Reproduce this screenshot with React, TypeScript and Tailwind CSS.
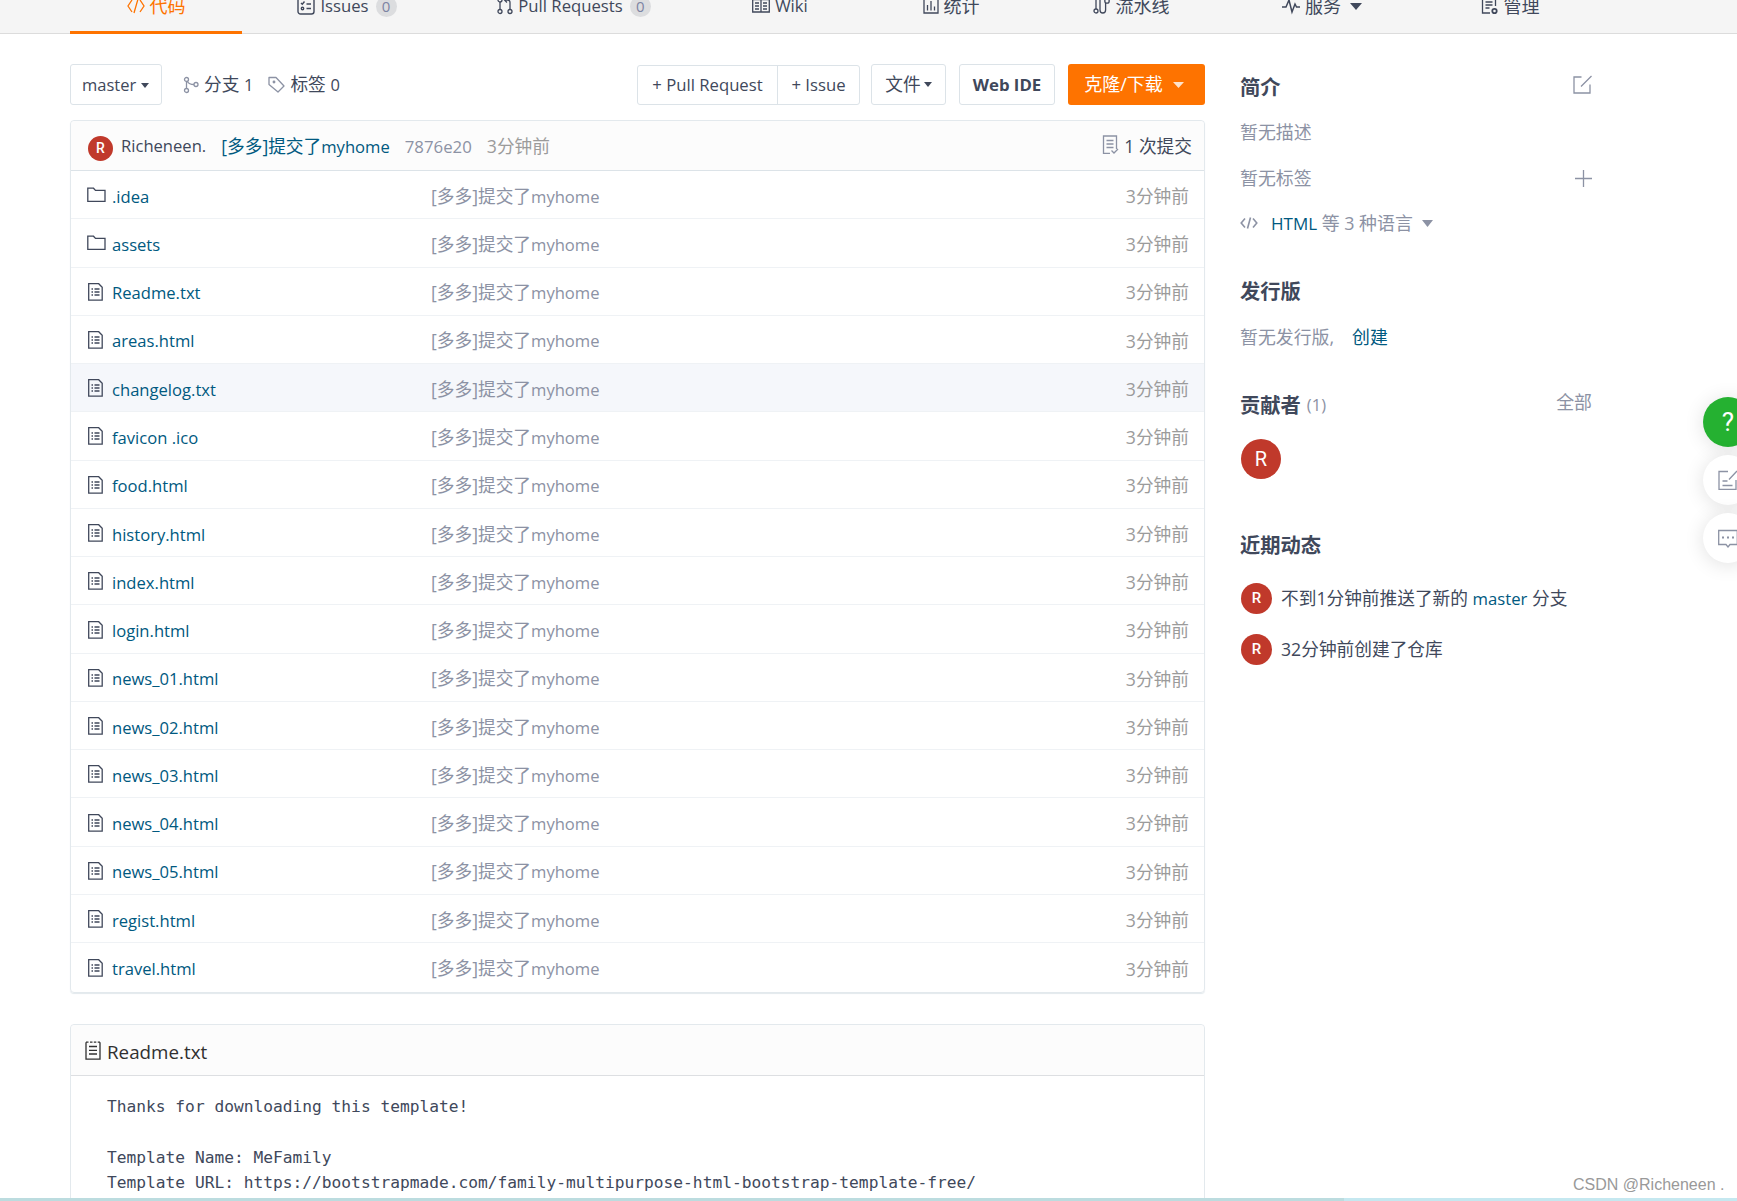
import type { ReactNode } from "react";
import clsx from "clsx";

interface TabTypes {
  label: string;
  width: string;
  icon: ReactNode;
  count?: number;
  active?: boolean;
  caret?: boolean;
  latin?: boolean;
}

interface FileRowTypes {
  name: string;
  folder?: boolean;
  hovered?: boolean;
}

interface IconProps {
  className?: string;
  size?: number;
  width?: number;
  strokeWidth?: number;
  children?: ReactNode;
}

function Icon({ className, size = 18, width, strokeWidth = 1.3, children }: IconProps) {
  const w = width ?? size;
  return (
    <svg
      className={clsx("shrink-0", className)}
      width={w}
      height={size}
      viewBox={`0 0 ${w} ${size}`}
      fill="none"
      stroke="currentColor"
      strokeWidth={strokeWidth}
    >
      {children}
    </svg>
  );
}

function Caret({ className }: { className?: string }) {
  return (
    <svg className={clsx("shrink-0", className)} viewBox="0 0 10 6" fill="currentColor" preserveAspectRatio="none">
      <path d="M0 0h10L5 6z" />
    </svg>
  );
}

const CodeIcon = () => (
  <Icon>
    <path d="M5 3L1 9l4 6M13 3l4 6-4 6M11 2L7 16" />
  </Icon>
);

const IssuesIcon = () => (
  <Icon strokeWidth={1.4}>
    <rect x="1" y="1" width="16" height="16" rx="2.5" />
    <path d="M4 6l1.3 1.3L7.500 4.500M9.500 7H14M9.500 11.500H14" />
    <circle cx="5.5" cy="11.5" r="1.2" />
  </Icon>
);

const PullIcon = () => (
  <Icon width={16}>
    <circle cx="3" cy="14.5" r="2" />
    <circle cx="3" cy="3" r="2" />
    <circle cx="13" cy="14.5" r="2" />
    <path d="M3 5v7.500M13 12.500V5.500Q13 3 10.500 3H8M10 .5L7.500 3 10 5.500" />
  </Icon>
);

const WikiIcon = () => (
  <Icon>
    <path d="M.7 2.500H9V15H.7zM9 2.500h8.300V15H9zM3 6h4M3 9h4M3 12h4M11 6h4M11 9h4M11 12h4" />
  </Icon>
);

const ChartIcon = () => (
  <Icon width={16}>
    <path d="M1 3v13h14V3M4.500 13.500V8M8 13.500V4M11.500 13.500v-4" />
  </Icon>
);

const PipelineIcon = () => (
  <Icon>
    <circle cx="3" cy="14" r="2" />
    <path d="M3 12V3M7 3v10q0 3 2.800 3t2.800-3V6" />
    <circle cx="14" cy="4" r="2.2" />
  </Icon>
);

const ServiceIcon = () => (
  <Icon strokeWidth={1.5}>
    <path d="M0 10h4L7 3l3 12 3-8 1.500 3H18" />
  </Icon>
);

const ManageIcon = () => (
  <Icon>
    <path d="M9 16H1.500V1.500h13V9M4.500 5h7M4.500 8h7M4.500 11h4" />
    <circle cx="13.5" cy="14" r="2.2" strokeWidth={1.8} />
  </Icon>
);

const FolderIcon = () => (
  <Icon size={16} width={19}>
    <path d="M.8 14.300V1.200h5.700l2 2.200h9.500v10.900z" />
  </Icon>
);

const FileIcon = () => (
  <Icon width={15}>
    <path d="M.7.700h10l3.500 3.500v13H.7zM3.500 6h1.500M6.500 6h5M3.500 9h1.500M6.500 9h5M3.500 12h1.500M6.500 12h5" />
  </Icon>
);

const ReadmeIcon = () => (
  <Icon size={19} width={16}>
    <path d="M1 1.200v17h14v-17M1 1.200h2.500M5 1.200h2.500M8.800 1.200h2.500M12.700 1.200H15M4 5.500h8M4 9.300h8M4 13h8" />
  </Icon>
);

const BranchIcon = () => (
  <Icon width={16} className="text-[#8c92a4]">
    <circle cx="3.5" cy="3.5" r="2" />
    <circle cx="3.5" cy="14.5" r="2" />
    <circle cx="13" cy="8.5" r="2" />
    <path d="M3.500 5.500v7M4.500 5.500Q6 8.500 11 8.500" />
  </Icon>
);

const TagIcon = () => (
  <Icon width={17} className="text-[#8c92a4]">
    <path d="M1 1.500h7l8 8.500-6 6L1 8.500z" strokeLinejoin="round" />
    <circle cx="6" cy="6" r=".8" fill="currentColor" />
  </Icon>
);

const CommitIcon = () => (
  <Icon size={20} width={17} className="-mt-[3px] text-[#8c92a4]">
    <path d="M8 18.300H1.500V1h13v13M4.500 5.500h7M4.500 9h7M4.500 12.500h7M9.500 15.500l2.500 2.500 4-4" />
  </Icon>
);

const EditIcon = () => (
  <Icon size={19} width={19} className="-mt-[6px] text-[#8c92a4]">
    <path d="M8.500 2H1v16h16V9.500M8 11.500L18.500 1" />
  </Icon>
);

const tabs: TabTypes[] = [
  { label: "代码", width: "w-[172px]", icon: <CodeIcon />, active: true },
  { label: "Issues", width: "w-[210px]", icon: <IssuesIcon />, count: 0, latin: true },
  { label: "Pull Requests", width: "w-[244px]", icon: <PullIcon />, count: 0, latin: true },
  { label: "Wiki", width: "w-[168px]", icon: <WikiIcon />, latin: true },
  { label: "统计", width: "w-[174px]", icon: <ChartIcon /> },
  { label: "流水线", width: "w-[186px]", icon: <PipelineIcon /> },
  { label: "服务", width: "w-[196px]", icon: <ServiceIcon />, caret: true },
  { label: "管理", width: "w-[180px]", icon: <ManageIcon /> },
];

const files: FileRowTypes[] = [
  { name: ".idea", folder: true },
  { name: "assets", folder: true },
  { name: "Readme.txt" },
  { name: "areas.html" },
  { name: "changelog.txt", hovered: true },
  { name: "favicon .ico" },
  { name: "food.html" },
  { name: "history.html" },
  { name: "index.html" },
  { name: "login.html" },
  { name: "news_01.html" },
  { name: "news_02.html" },
  { name: "news_03.html" },
  { name: "news_04.html" },
  { name: "news_05.html" },
  { name: "regist.html" },
  { name: "travel.html" },
];

const readme = `Thanks for downloading this template!

Template Name: MeFamily
Template URL: https://bootstrapmade.com/family-multipurpose-html-bootstrap-template-free/`;

function Avatar({ className }: { className: string }) {
  return (
    <span
      className={clsx(
        "flex shrink-0 items-center justify-center rounded-full bg-[#c0392b] font-['Roboto',sans-serif] text-white",
        className
      )}
    >
      R
    </span>
  );
}

function CommitMessage() {
  return (
    <>
      [多多]提交了<span className="text-[16.6px]">myhome</span>
    </>
  );
}

function TabBar() {
  return (
    <nav className="flex h-[34px] items-end border-b border-[#dcdcdc] bg-[#f5f5f5] pl-[70px]">
      <div className="-mb-px flex h-[56px] shrink-0">
        {tabs.map((tab) => (
          <a
            key={tab.label}
            className={clsx(
              "flex items-center justify-center gap-[5px]",
              tab.width,
              tab.active ? "border-b-[3px] border-[#fe7300] pt-[3px] text-[#fe7300]" : "text-[#40485b]"
            )}
          >
            {tab.icon}
            <span className={tab.latin ? "text-[16.7px]" : "text-[18px]"}>{tab.label}</span>
            {tab.count !== undefined && (
              <span className="ml-[2px] flex size-[21px] items-center justify-center rounded-full bg-[#dcdddf] text-[15px] text-[#7c84a3]">
                {tab.count}
              </span>
            )}
            {tab.caret && <Caret className="ml-1 h-[7px] w-[12px]" />}
          </a>
        ))}
      </div>
    </nav>
  );
}

function Toolbar() {
  return (
    <div className="flex h-[41px] items-center">
      <button className="flex h-[41px] w-[92px] items-center gap-[5px] rounded-[3px] border border-[#dce3e8] pt-px pl-[11px] text-[16.5px]">
        master
        <Caret className="h-[5px] w-[8px]" />
      </button>
      <div className="ml-[21px] flex items-center gap-[5px]">
        <BranchIcon />
        <span>
          分支 <span className="text-[16.5px]">1</span>
        </span>
      </div>
      <div className="ml-[15px] flex items-center gap-[5px]">
        <TagIcon />
        <span>
          标签 <span className="text-[16.5px]">0</span>
        </span>
      </div>
      <div className="mt-px ml-auto flex h-[40px] rounded-[3px] border border-[#dce3e8] text-[16.7px]">
        <button className="w-[140px] border-r border-[#dce3e8]">+ Pull Request</button>
        <button className="w-[81px]">+ Issue</button>
      </div>
      <button className="ml-[11px] flex h-[41px] w-[75px] items-center justify-center gap-[3px] rounded-[3px] border border-[#dce3e8]">
        文件
        <Caret className="h-[5px] w-[8px]" />
      </button>
      <button className="ml-[13px] h-[41px] w-[96px] rounded-[3px] border border-[#dce3e8] pt-px text-[16.8px] font-bold">
        Web IDE
      </button>
      <button className="ml-[13px] flex h-[41px] w-[137px] items-center justify-center gap-[10px] rounded-[3px] bg-[#fe7300] pr-[5px] text-[18px] text-white">
        克隆/下载
        <Caret className="h-[6px] w-[11px] opacity-80" />
      </button>
    </div>
  );
}

function FileRow({ name, folder, hovered }: FileRowTypes) {
  return (
    <div
      className={clsx(
        "flex h-[48.27px] items-center border-b border-[#eff2f5] pt-[3px] pr-[15px] pl-[16px] last:border-b-0",
        hovered && "bg-[#f5f7fb]"
      )}
    >
      <div className="flex w-[344px] items-center pt-[2px]">
        <span className={clsx("-mt-[4px] flex w-[25px]", !folder && "pl-px")}>
          {folder ? <FolderIcon /> : <FileIcon />}
        </span>
        <a className="text-[16.6px] text-[#005980]">{name}</a>
      </div>
      <span className="text-[#8c92a4]">
        <CommitMessage />
      </span>
      <span className="ml-auto text-[#9b9b9b]">3分钟前</span>
    </div>
  );
}

function FileList() {
  return (
    <section className="mt-[15px] rounded-[4px] border border-[#e3e9ed] shadow-[0_1px_1px_#e3e9ed]">
      <header className="flex h-[50px] items-center rounded-t-[4px] border-b border-[#dce3e8] bg-[#fcfcfc] pt-[2px] pr-[12px] pl-[17px]">
        <Avatar className="mt-[3px] size-[25px] text-[14px] font-medium" />
        <span className="ml-[8px] text-[16.6px]">Richeneen.</span>
        <a className="ml-[15px] text-[#005980]">
          <CommitMessage />
        </a>
        <span className="ml-[15px] text-[16.8px] text-[#8c92a4]">7876e20</span>
        <span className="ml-[15px] text-[#9b9b9b]">3分钟前</span>
        <span className="ml-auto flex items-center gap-[5px]">
          <CommitIcon />
          <span>1 次提交</span>
        </span>
      </header>
      {files.map((file) => (
        <FileRow key={file.name} {...file} />
      ))}
    </section>
  );
}

function Readme() {
  return (
    <section className="mt-[31px] h-[240px] rounded-t-[4px] border border-[#e3e9ed]">
      <header className="flex h-[51px] items-center gap-[6px] rounded-t-[4px] border-b border-[#dddfe2] bg-[#fcfcfc] px-[14px] pt-[2px] text-[#303030]">
        <ReadmeIcon />
        <span className="mt-[4px] text-[18.8px]">Readme.txt</span>
      </header>
      <pre className="px-[36px] pt-[18px] font-['DejaVu_Sans_Mono',monospace] text-[16.23px] leading-[25.6px]">
        {readme}
      </pre>
    </section>
  );
}

function Sidebar() {
  return (
    <aside className="w-[352px] pt-[9px] text-[17.9px] text-[#8c92a4]">
      <div className="flex h-[28px] items-center justify-between">
        <h3 className="text-[20.3px] font-bold text-[#40485b]">简介</h3>
        <EditIcon />
      </div>
      <p className="mt-[17px] h-[28px] leading-[28px]">暂无描述</p>
      <div className="mt-[18px] flex h-[28px] items-center justify-between">
        <span>暂无标签</span>
        <Icon size={17}>
          <path d="M8.500 0v17M0 8.500h17" />
        </Icon>
      </div>
      <div className="mt-[17px] flex h-[28px] items-center">
        <Icon size={12} width={18} strokeWidth={1.6}>
          <path d="M5 1.500L1.200 6 5 10.500M13 1.500L16.800 6 13 10.500M10.500.500l-3 11" />
        </Icon>
        <span className="ml-[13px]">
          <a className="text-[17px] text-[#005980]">HTML</a> 等 3 种语言
        </span>
        <Caret className="ml-[9px] h-[7px] w-[11px]" />
      </div>

      <h3 className="mt-[40px] h-[28px] text-[20.3px] leading-[28px] font-bold text-[#40485b]">发行版</h3>
      <p className="mt-[18px] h-[28px] leading-[28px]">
        暂无发行版,<a className="ml-[18px] text-[#005980]">创建</a>
      </p>

      <div className="mt-[40px] flex h-[28px] items-center">
        <h3 className="text-[20.3px] font-bold text-[#40485b]">贡献者</h3>
        <span className="ml-[6px] text-[16.5px]">(1)</span>
        <span className="-mt-[5px] ml-auto">全部</span>
      </div>
      <Avatar className="mt-[20px] ml-px size-[40px] text-[20px]" />

      <h3 className="mt-[52px] h-[28px] text-[20.3px] leading-[28px] font-bold text-[#40485b]">近期动态</h3>
      <ul className="mt-[24px] flex flex-col gap-[20px] pl-px text-[17.7px] text-[#40485b]">
        <li className="flex h-[31px] items-center gap-[9px]">
          <Avatar className="size-[31px] text-[15px] font-medium" />
          <span>
            不到1分钟前推送了新的 <a className="text-[16.7px] text-[#005980]">master</a> 分支
          </span>
        </li>
        <li className="flex h-[31px] items-center gap-[9px]">
          <Avatar className="size-[31px] text-[15px] font-medium" />
          <span>32分钟前创建了仓库</span>
        </li>
      </ul>
    </aside>
  );
}

function FloatingTools() {
  return (
    <div className="absolute top-[397px] left-[1703px] flex flex-col gap-[8px] text-[#8c92a4]">
      <div className="flex size-[50px] items-center justify-center rounded-full bg-[#25b131] font-['Roboto',sans-serif] text-[26px] text-white shadow-[0_2px_20px_rgba(0,0,0,0.12)]">
        ?
      </div>
      <div className="flex size-[50px] items-center justify-center rounded-full bg-white shadow-[0_2px_20px_rgba(0,0,0,0.12)]">
        <Icon size={20} width={20}>
          <path d="M10 1.500H1v18h17V10M11 9.500L19 1M4.500 11h5M4.500 15.500h10" />
        </Icon>
      </div>
      <div className="flex size-[50px] items-center justify-center rounded-full bg-white shadow-[0_2px_20px_rgba(0,0,0,0.12)]">
        <Icon size={20} width={20}>
          <path d="M.7 2.500h18.600v14H12l-2 2.500-2-2.500H.7z" />
          <path d="M4 9.500h2M9 9.500h2M14 9.500h2" strokeWidth={2} />
        </Icon>
      </div>
    </div>
  );
}

export default function App() {
  return (
    <div className="relative h-[1201px] w-[1737px] overflow-hidden bg-white font-['Open_Sans','Noto_Sans_CJK_SC',sans-serif] text-[17.7px] text-[#40485b]">
      <TabBar />
      <div className="flex gap-[35px] pt-[30px] pl-[70px]">
        <main className="w-[1135px]">
          <Toolbar />
          <FileList />
          <Readme />
        </main>
        <Sidebar />
      </div>
      <FloatingTools />
      <div className="absolute bottom-0 left-0 flex h-[3px] w-full">
        <div className="w-[1344px] bg-[#bcdcdf]" />
        <div className="flex-1 bg-[#c5e8f0]" />
      </div>
      <div className="absolute top-[1175px] left-[1573px] font-['Liberation_Sans',sans-serif] text-[16px] leading-[20px] whitespace-pre text-[#999]">
        CSDN @Richeneen .
      </div>
    </div>
  );
}
